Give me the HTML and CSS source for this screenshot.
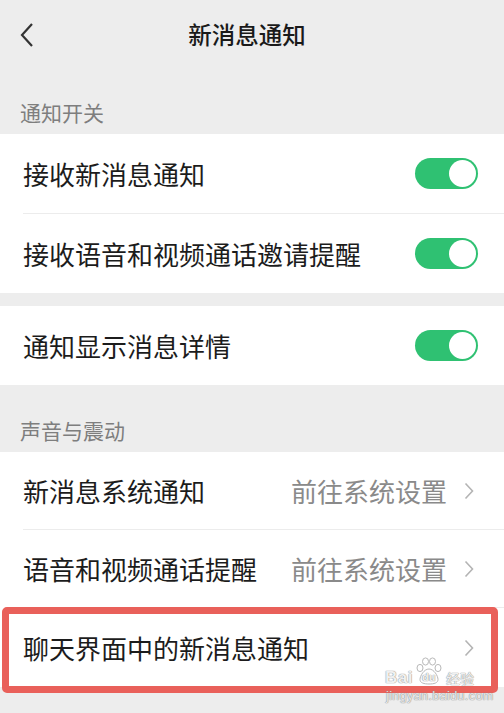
FILE: index.html
```html
<html>

<head>
  <title>新消息通知</title>
  <meta name="viewport" content="width=device-width, initial-scale=1">
  <link rel="stylesheet" href="styles.css">
</head>

<body>
  <div class="topbar">
    <svg class="back" width="16" height="26" viewBox="0 0 16 26">
      <path d="M13 2 L3 13 L13 24" fill="none" stroke="#333" stroke-width="2.2" />
    </svg>
    <div class="title">新消息通知</div>
  </div>

  <div class="label first">通知开关</div>
  <div class="group">
    <div class="row">
      <span class="name">接收新消息通知</span>
      <span class="switch"><span class="knob"></span></span>
    </div>
    <div class="row">
      <span class="name">接收语音和视频通话邀请提醒</span>
      <span class="switch"><span class="knob"></span></span>
    </div>
  </div>

  <div class="gap"></div>
  <div class="group">
    <div class="row">
      <span class="name">通知显示消息详情</span>
      <span class="switch"><span class="knob"></span></span>
    </div>
  </div>

  <div class="label">声音与震动</div>
  <div class="group">
    <div class="row link">
      <span class="name">新消息系统通知</span>
      <span class="value">前往系统设置</span>
      <svg class="arrow" width="10" height="18" viewBox="0 0 10 18">
        <path d="M1.5 1.5 L8.5 9 L1.5 16.5" fill="none" stroke="#b4b4b4" stroke-width="1.6" />
      </svg>
    </div>
    <div class="row link">
      <span class="name">语音和视频通话提醒</span>
      <span class="value">前往系统设置</span>
      <svg class="arrow" width="10" height="18" viewBox="0 0 10 18">
        <path d="M1.5 1.5 L8.5 9 L1.5 16.5" fill="none" stroke="#b4b4b4" stroke-width="1.6" />
      </svg>
    </div>
    <div class="row link marked">
      <span class="name">聊天界面中的新消息通知</span>
      <svg class="arrow" width="10" height="18" viewBox="0 0 10 18">
        <path d="M1.5 1.5 L8.5 9 L1.5 16.5" fill="none" stroke="#b4b4b4" stroke-width="1.6" />
      </svg>
      <div class="watermark">
        <div class="wm-logo">
          <span class="wm-bai">Bai</span>
          <span class="wm-paw">
            <svg width="28" height="28" viewBox="0 0 28 28">
              <g fill="rgba(255,255,255,0.85)" stroke="#b8b8b8" stroke-width="1">
                <ellipse cx="5" cy="11" rx="3" ry="3.6" />
                <ellipse cx="10.5" cy="4.5" rx="3" ry="3.6" />
                <ellipse cx="17.5" cy="4.5" rx="3" ry="3.6" />
                <ellipse cx="23" cy="11" rx="3" ry="3.6" />
                <path d="M14 12 C9 12 5 19 5 22.5 C5 26 9 27 14 27 C19 27 23 26 23 22.5 C23 19 19 12 14 12 Z" />
              </g>
            </svg>
            <span class="wm-du">du</span>
          </span>
          <span class="wm-cn">经验</span>
        </div>
        <div class="wm-url">jingyan.baidu.com</div>
      </div>
    </div>
  </div>
</body>

</html>
```

FILE: styles.css
```css
body {
  margin: 0;
  background-color: #ededed;
  color: #1c1c1c;
  font-family: "Noto Sans CJK SC", "Noto Sans", sans-serif;
  overflow: hidden;
}

.topbar {
  height: 74px;
  padding-bottom: 6px;
  box-sizing: border-box;
  display: flex;
  align-items: center;
  justify-content: center;
  position: relative;
}

.back {
  position: absolute;
  left: 19px;
  top: 22px;
}

.title {
  font-size: 23.5px;
  font-weight: 500;
  margin-right: 10px;
  color: #1a1a1a;
}

.label {
  height: 67px;
  display: flex;
  align-items: flex-end;
  padding-left: 20px;
  padding-bottom: 10px;
  box-sizing: border-box;
  font-size: 21px;
  line-height: 24px;
  color: #7e7e7e;
}

.label.first {
  height: 60px;
}

.gap {
  height: 13px;
}

.group {
  background-color: white;
}

.row {
  height: 79px;
  margin-left: 23px;
  padding-right: 26px;
  display: flex;
  align-items: center;
  font-size: 26px;
}

.row + .row {
  border-top: 1px solid #ececec;
}

.row.link {
  height: 77px;
  padding-right: 30px;
}

.name {
  flex: 1;
}

.value {
  color: #8a8a8a;
  margin-right: 17px;
}

.switch {
  width: 63px;
  height: 31px;
  border-radius: 16px;
  background-color: #2fc172;
  display: flex;
  align-items: center;
  justify-content: flex-end;
  padding-right: 2px;
  box-sizing: border-box;
}

.knob {
  width: 27px;
  height: 27px;
  border-radius: 50%;
  background-color: white;
}

.row.marked {
  height: 79px;
  position: relative;
}

.row.marked::after {
  content: "";
  position: absolute;
  left: -21px;
  right: 6px;
  top: -1px;
  height: 86px;
  border: 7px solid #e9605a;
  border-radius: 5px;
  box-sizing: border-box;
}

.watermark {
  position: absolute;
  left: 362px;
  top: 49px;
  width: 95px;
  color: rgba(255, 255, 255, 0.9);
  text-shadow: 0 0 1px #8a8a8a, 0 0 1px #8a8a8a;
  font-family: "Liberation Sans", "Noto Sans CJK SC", sans-serif;
  z-index: 1;
}

.wm-logo {
  display: flex;
  align-items: flex-end;
  height: 28px;
}

.wm-bai {
  font-size: 17px;
  line-height: 14px;
  font-weight: bold;
  letter-spacing: 0.5px;
}

.wm-paw {
  position: relative;
  width: 28px;
  height: 28px;
  margin: 0 3px 0 2px;
}

.wm-paw svg {
  position: absolute;
  left: 0;
  top: 0;
}

.wm-du {
  position: absolute;
  left: 7px;
  bottom: 2px;
  font-size: 11px;
  line-height: 11px;
  font-weight: bold;
}

.wm-cn {
  font-size: 14px;
  line-height: 14px;
  font-family: "Noto Sans CJK SC", sans-serif;
}

.wm-url {
  font-size: 12.5px;
  line-height: 14px;
  margin-top: 4px;
  margin-left: 1px;
  letter-spacing: 0.4px;
  color: rgba(255, 255, 255, 0.8);
}
```
